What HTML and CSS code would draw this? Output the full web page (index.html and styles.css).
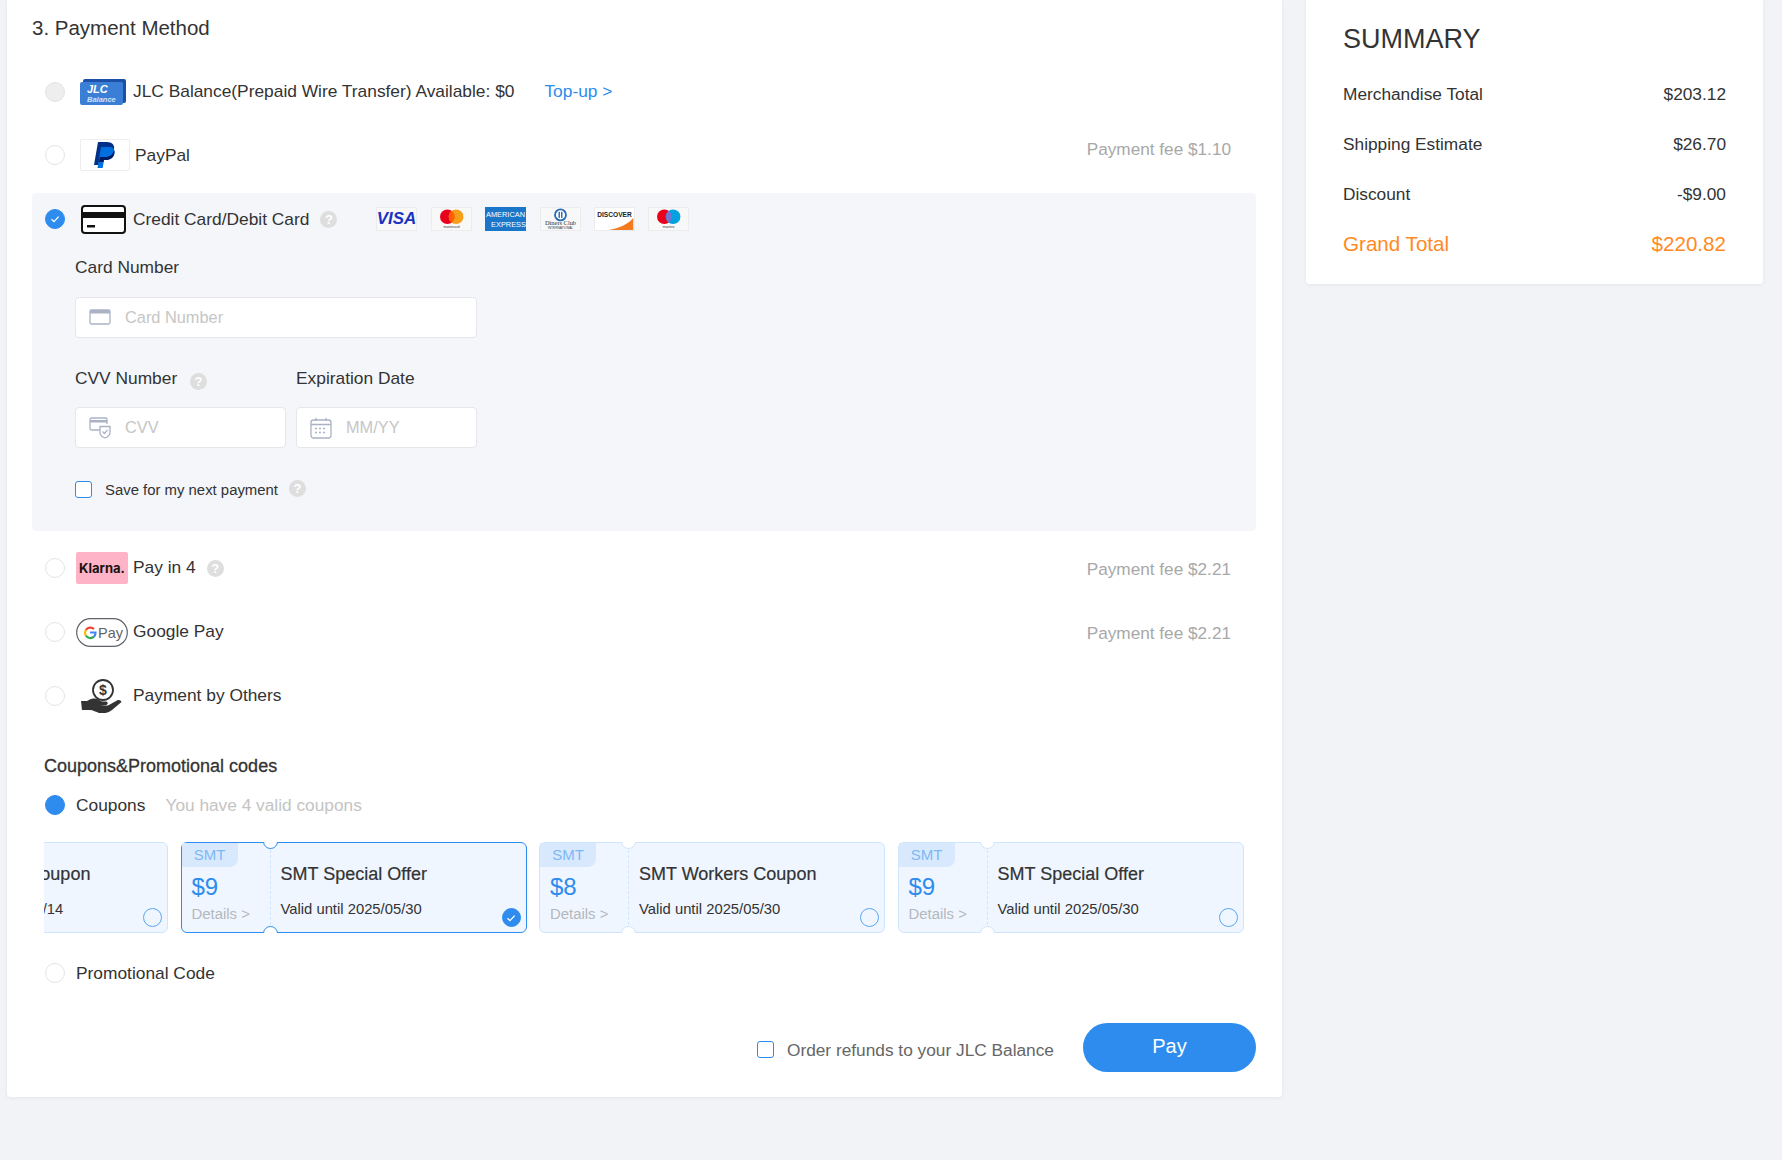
FILE: index.html
```html
<!DOCTYPE html>
<html>
<head>
  <title>Checkout - Payment</title>
  <link rel="stylesheet" href="styles.css">
</head>
<body>
  <div class="page">
    <div class="main-card">
      <h2 class="section-title">3. Payment Method</h2>

      <!-- JLC balance -->
      <div class="pay-row pay-row-jlc">
        <span class="radio radio-disabled"></span>
        <svg class="pay-icon icon-jlc" viewBox="0 0 46 26">
          <rect x="3" y="0" width="43" height="24" rx="2" fill="#1c4fa8"/>
          <rect x="0" y="3" width="43" height="23" rx="2" fill="#3b7ed6"/>
          <text x="7" y="13.500" class="jlc-big">JLC</text>
          <text x="7" y="22.500" class="jlc-small">Balance</text>
        </svg>
        <span class="pay-label">JLC Balance(Prepaid Wire Transfer) Available: $0</span>
        <a class="top-up">Top-up &gt;</a>
      </div>

      <!-- PayPal -->
      <div class="pay-row">
        <span class="radio"></span>
        <span class="paypal-box">
          <svg width="26" height="28" viewBox="0 0 26 28">
            <path d="M6 1h9c5 0 8 3 7 7.500C21 14 17 16 12 16H9l-1.500 8H2z" fill="#003087"/>
            <path d="M9 6h8c4 0 6 2.500 5.500 6C22 16.500 18 19 14 19h-2l-1.300 8H5.500z" fill="#0070e0"/>
            <path d="M8 16h5c4 0 8-2 9-7 .4 1 .6 2 .4 3C22 16.500 18 19 14 19h-2l-.5 2H7z" fill="#001c64"/>
          </svg>
        </span>
        <span class="pay-label">PayPal</span>
        <span class="pay-fee pay-fee-high">Payment fee $1.10</span>
      </div>

      <!-- Credit card panel -->
      <div class="card-panel">
        <div class="pay-row pay-row-card">
          <span class="radio radio-checked">
            <svg width="12" height="12" viewBox="0 0 12 12"><path d="M2.500 6.200 5 8.600 9.600 3.600" fill="none" stroke="#fff" stroke-width="1.300"/></svg>
          </span>
          <svg class="pay-icon icon-card" viewBox="0 0 45 29">
            <rect x="1" y="1" width="43" height="27" rx="3" fill="#fff" stroke="#111" stroke-width="2"/>
            <rect x="1" y="7" width="43" height="6" fill="#111"/>
            <rect x="6" y="20" width="8" height="2.500" fill="#111"/>
          </svg>
          <span class="pay-label">Credit Card/Debit Card</span>
          <span class="help help-card">?</span>
          <div class="brand-list">
            <svg class="brand" viewBox="0 0 41 24">
              <text x="20.500" y="17.500" text-anchor="middle" class="brand-visa">VISA</text>
            </svg>
            <svg class="brand" viewBox="0 0 41 24">
              <circle cx="16" cy="9.500" r="8" fill="#eb001b"/>
              <circle cx="25.500" cy="9.500" r="8" fill="#f79e1b"/>
              <path d="M20.750 3.070a8 8 0 0 1 0 12.860 8 8 0 0 1 0-12.860z" fill="#ff5f00"/>
              <text x="20.500" y="22" text-anchor="middle" class="brand-tiny">mastercard</text>
            </svg>
            <svg class="brand brand-amex" viewBox="0 0 41 24">
              <rect width="41" height="24" fill="#1a76c9"/>
              <text x="20.500" y="10" text-anchor="middle" class="amex-text">AMERICAN</text>
              <text x="23.500" y="20" text-anchor="middle" class="amex-text">EXPRESS</text>
            </svg>
            <svg class="brand" viewBox="0 0 41 24">
              <circle cx="20.500" cy="7.500" r="6" fill="#fff" stroke="#2a6db5" stroke-width="2"/>
              <rect x="18.300" y="4.200" width="1.600" height="6.600" fill="#2a6db5"/>
              <rect x="21.100" y="4.200" width="1.600" height="6.600" fill="#2a6db5"/>
              <text x="20.500" y="19" text-anchor="middle" class="diners-text">Diners Club</text>
              <text x="20.500" y="22.800" text-anchor="middle" class="brand-tiny">INTERNATIONAL</text>
            </svg>
            <svg class="brand brand-white" viewBox="0 0 41 24">
              <path d="M41 11v13H14C26 22 35 18 41 11z" fill="#f47a20"/>
              <text x="20.500" y="10" text-anchor="middle" class="discover-text">DISCOVER</text>
            </svg>
            <svg class="brand" viewBox="0 0 41 24">
              <circle cx="16" cy="9.500" r="8" fill="#eb001b"/>
              <circle cx="25.500" cy="9.500" r="8" fill="#00a1df"/>
              <path d="M20.750 3.070a8 8 0 0 1 0 12.860 8 8 0 0 1 0-12.860z" fill="#7375cf"/>
              <text x="20.500" y="22" text-anchor="middle" class="brand-tiny">maestro</text>
            </svg>
          </div>
        </div>

        <div class="card-form">
          <label class="field-label field-label-first">Card Number</label>
          <div class="input-box input-wide">
            <svg class="input-icon" viewBox="0 0 22 18">
              <rect x="1" y="2" width="20" height="14" rx="1.500" fill="none" stroke="#aab2c5" stroke-width="1.300"/>
              <rect x="1" y="2" width="20" height="3.500" fill="#aab2c5"/>
            </svg>
            <input type="text" placeholder="Card Number">
          </div>

          <div class="field-pair">
            <div class="field-cvv">
              <label class="field-label">CVV Number <span class="help help-cvv">?</span></label>
              <div class="input-box">
                <svg class="input-icon" viewBox="0 0 22 22">
                  <path d="M13 13H2.500A1.500 1.500 0 0 1 1 11.500v-9A1.500 1.500 0 0 1 2.500 1h14A1.500 1.500 0 0 1 18 2.500V7" fill="none" stroke="#aab2c5" stroke-width="1.300"/>
                  <rect x="1" y="3" width="17" height="2.500" fill="#aab2c5"/>
                  <path d="M11 9.500h10v6c0 3-2.500 4.500-5 5.500-2.500-1-5-2.500-5-5.500z" fill="#fff" stroke="#aab2c5" stroke-width="1.300"/>
                  <path d="M13.500 14.500l2 2 3-3.500" fill="none" stroke="#aab2c5" stroke-width="1.200"/>
                </svg>
                <input type="text" placeholder="CVV">
              </div>
            </div>
            <div class="field-date">
              <label class="field-label">Expiration Date</label>
              <div class="input-box">
                <svg class="input-icon" viewBox="0 0 22 22">
                  <rect x="1" y="3" width="20" height="18" rx="2.500" fill="none" stroke="#aab2c5" stroke-width="1.300"/>
                  <path d="M1 7.500h20M6 1v3M16 1v3" fill="none" stroke="#aab2c5" stroke-width="1.300"/>
                  <path d="M5 11.500h12M5 15.500h12" fill="none" stroke="#aab2c5" stroke-width="1.500" stroke-dasharray="2 2"/>
                </svg>
                <input type="text" placeholder="MM/YY">
              </div>
            </div>
          </div>

          <div class="save-row">
            <span class="checkbox"></span>
            <span class="save-text">Save for my next payment</span>
            <span class="help help-save">?</span>
          </div>
        </div>
      </div>

      <!-- Klarna -->
      <div class="pay-row pay-row-klarna">
        <span class="radio"></span>
        <span class="klarna-logo">Klarna.</span>
        <span class="pay-label pay-label-up">Pay in 4</span>
        <span class="help help-klarna">?</span>
        <span class="pay-fee">Payment fee $2.21</span>
      </div>

      <!-- Google Pay -->
      <div class="pay-row">
        <span class="radio"></span>
        <svg class="pay-icon icon-gpay" viewBox="0 0 52 29">
          <rect x=".7" y=".7" width="50.600" height="27.600" rx="13.800" fill="#fff" stroke="#5f6368" stroke-width="1.200"/>
          <path d="M18 11a5.500 5.500 0 0 0-8.200 1" fill="none" stroke="#ea4335" stroke-width="2.200"/>
          <path d="M9.800 12a5.500 5.500 0 0 0 0 5.500" fill="none" stroke="#fbbc04" stroke-width="2.200"/>
          <path d="M9.800 17.500a5.500 5.500 0 0 0 8.200 1.200" fill="none" stroke="#34a853" stroke-width="2.200"/>
          <path d="M18 18.700a5.500 5.500 0 0 0 1.500-4.200H14" fill="none" stroke="#4285f4" stroke-width="2.200"/>
          <text x="22" y="20" class="gpay-text">Pay</text>
        </svg>
        <span class="pay-label pay-label-up">Google Pay</span>
        <span class="pay-fee">Payment fee $2.21</span>
      </div>

      <!-- Payment by others -->
      <div class="pay-row">
        <span class="radio"></span>
        <svg class="pay-icon icon-others" viewBox="0 0 42 34">
          <circle cx="22" cy="11" r="10" fill="#fff" stroke="#333" stroke-width="1.800"/>
          <text x="22" y="16" text-anchor="middle" class="others-text">$</text>
          <path d="M0 22h6l2-1c3-2 7-2 10 0l3 1.500h4c2 0 2.500 3 0 3.500l-6 .5h8l9-5c2-1 4 0 4.500 1.500L31 31c-4 3-9 4-13 3-3-1-6-3-9-3H1z" fill="#333"/>
        </svg>
        <span class="pay-label pay-label-up">Payment by Others</span>
      </div>

      <!-- Coupons -->
      <h3 class="coupon-title">Coupons&amp;Promotional codes</h3>
      <div class="coupon-switch">
        <span class="radio radio-on"></span>
        <span class="switch-label">Coupons</span>
        <span class="switch-hint">You have 4 valid coupons</span>
      </div>

      <div class="coupon-strip">
        <div class="coupon coupon-first">
          <div class="coupon-left">
            <span class="coupon-tag">SMT</span>
            <div class="coupon-price">$8</div>
            <div class="coupon-details">Details &gt;</div>
          </div>
          <div class="coupon-right">
            <div class="coupon-name">SMT Worker Coupon</div>
            <div class="coupon-valid">Valid until 2025/05/14</div>
          </div>
          <span class="coupon-radio"></span>
        </div>
        <div class="coupon coupon-active">
          <div class="coupon-left">
            <span class="coupon-tag">SMT</span>
            <div class="coupon-price">$9</div>
            <div class="coupon-details">Details &gt;</div>
          </div>
          <div class="coupon-right">
            <div class="coupon-name">SMT Special Offer</div>
            <div class="coupon-valid">Valid until 2025/05/30</div>
          </div>
          <span class="coupon-radio coupon-radio-on">
            <svg width="12" height="12" viewBox="0 0 12 12"><path d="M2.500 6.200 5 8.600 9.600 3.600" fill="none" stroke="#fff" stroke-width="1.300"/></svg>
          </span>
        </div>
        <div class="coupon">
          <div class="coupon-left">
            <span class="coupon-tag">SMT</span>
            <div class="coupon-price">$8</div>
            <div class="coupon-details">Details &gt;</div>
          </div>
          <div class="coupon-right">
            <div class="coupon-name">SMT Workers Coupon</div>
            <div class="coupon-valid">Valid until 2025/05/30</div>
          </div>
          <span class="coupon-radio"></span>
        </div>
        <div class="coupon">
          <div class="coupon-left">
            <span class="coupon-tag">SMT</span>
            <div class="coupon-price">$9</div>
            <div class="coupon-details">Details &gt;</div>
          </div>
          <div class="coupon-right">
            <div class="coupon-name">SMT Special Offer</div>
            <div class="coupon-valid">Valid until 2025/05/30</div>
          </div>
          <span class="coupon-radio"></span>
        </div>
      </div>

      <div class="coupon-switch promo-switch">
        <span class="radio"></span>
        <span class="switch-label">Promotional Code</span>
      </div>

      <!-- Footer -->
      <div class="pay-footer">
        <span class="checkbox"></span>
        <span class="refund-text">Order refunds to your JLC Balance</span>
        <button class="pay-button">Pay</button>
      </div>
    </div>

    <div class="summary-card">
      <h2 class="summary-title">SUMMARY</h2>
      <div class="summary-row"><span>Merchandise Total</span><span>$203.12</span></div>
      <div class="summary-row"><span>Shipping Estimate</span><span>$26.70</span></div>
      <div class="summary-row"><span>Discount</span><span>-$9.00</span></div>
      <div class="summary-row summary-total"><span>Grand Total</span><span>$220.82</span></div>
    </div>
  </div>
</body>
</html>
```

FILE: styles.css
```css
body {
  margin: 0;
  height: 1160px;
  overflow: hidden;
  font-family: "Liberation Sans", Arial, sans-serif;
  color: #333;
  background-color: #f2f3f7;
}
.page {
  display: flex;
  align-items: flex-start;
  padding-left: 7px;
}
.main-card {
  width: 1275px;
  height: 1097px;
  padding-left: 25px;
  box-sizing: border-box;
  background-color: #fff;
  border-radius: 0 0 4px 4px;
  box-shadow: 0 1px 4px rgba(0,0,0,0.06);
}
.section-title {
  margin: 0;
  height: 60px;
  line-height: 55px;
  font-size: 20.500px;
  font-weight: normal;
}

/* payment rows */
.pay-row {
  display: flex;
  align-items: center;
  height: 64px;
}
.pay-row-jlc {
  height: 63px;
}
.pay-row-card {
  height: 52px;
}
.pay-row-klarna {
  margin-top: 5px;
}
.radio {
  flex: none;
  display: flex;
  align-items: center;
  justify-content: center;
  width: 20px;
  height: 20px;
  margin: 0 11px 0 13px;
  box-sizing: border-box;
  background-color: #fff;
  border: 1px solid #e4e4e4;
  border-radius: 50%;
}
.radio-disabled {
  background-color: #eee;
}
.radio-checked, .radio-on {
  background-color: #2d8cee;
  border-color: #2d8cee;
}
.pay-icon {
  flex: none;
}
.icon-jlc {
  width: 46px;
  height: 26px;
  margin: 0 7px 0 4px;
}
.icon-card {
  width: 45px;
  height: 29px;
  margin: 0 7px 0 5px;
}
.icon-gpay {
  width: 52px;
  height: 29px;
  margin-right: 5px;
}
.icon-others {
  width: 42px;
  height: 34px;
  margin: 0 10px 0 5px;
}
.jlc-big {
  font: italic bold 11px "Liberation Sans", sans-serif;
  fill: #fff;
}
.jlc-small {
  font: italic bold 7.500px "Liberation Sans", sans-serif;
  fill: #cfe2fa;
}
.paypal-box {
  flex: none;
  display: flex;
  align-items: center;
  justify-content: center;
  width: 50px;
  height: 32px;
  margin: 0 5px 0 4px;
  box-sizing: border-box;
  border: 1px solid #eee;
  border-radius: 2px;
}
.klarna-logo {
  flex: none;
  width: 52px;
  height: 32px;
  margin-right: 5px;
  line-height: 32px;
  text-align: center;
  font-family: Inter, "Liberation Sans", sans-serif;
  font-size: 13px;
  font-weight: bold;
  color: #17120f;
  background-color: #ffb3c7;
  border-radius: 2px;
}
.gpay-text {
  font: 14.500px "Liberation Sans", sans-serif;
  fill: #5f6368;
}
.others-text {
  font: bold 14px "Liberation Sans", sans-serif;
  fill: #333;
}
.pay-label {
  font-size: 17.350px;
}
.pay-label-up {
  margin-bottom: 2px;
}
.top-up {
  margin-left: 30px;
  font-size: 17.350px;
  color: #2d8cee;
}
.pay-fee {
  margin-left: auto;
  margin-top: 2px;
  margin-right: 51px;
  font-size: 17.200px;
  color: #a8a8a8;
}
.pay-fee-high {
  margin-bottom: 13px;
}
.help {
  display: inline-block;
  width: 17px;
  height: 17px;
  line-height: 17px;
  text-align: center;
  font-size: 13px;
  font-weight: bold;
  color: #fff;
  background-color: #dedede;
  border-radius: 50%;
}
.help-card {
  margin-left: 11px;
}
.help-cvv {
  margin-left: 8px;
  vertical-align: -2px;
}
.help-save {
  margin: -2px 0 0 11px;
}
.help-klarna {
  margin-left: 11px;
}

/* credit card logos */
.brand-list {
  display: flex;
  gap: 13.400px;
  margin-left: 39px;
}
.brand {
  width: 41px;
  height: 24px;
  background-color: #f8f8f9;
  border: 1px solid #ececee;
  box-sizing: border-box;
}
.brand-amex {
  border: none;
}
.brand-white {
  background-color: #fff;
}
.brand-visa {
  font: italic bold 18.500px "Liberation Sans", sans-serif;
  fill: #1a34c0;
}
.brand-tiny {
  font: 3.500px "Liberation Sans", sans-serif;
  fill: #333;
}
.amex-text {
  font: 7.400px "Liberation Sans", sans-serif;
  fill: #fff;
}
.diners-text {
  font: 7px "Liberation Serif", serif;
  fill: #333;
}
.discover-text {
  font: bold 7.200px "Liberation Sans", sans-serif;
  fill: #222;
}

/* card form */
.card-panel {
  width: 1224px;
  height: 338px;
  margin-top: 6px;
  background-color: #f4f6fa;
  border-radius: 4px;
}
.card-form {
  padding-left: 43px;
  width: 402px;
}
.field-label {
  display: block;
  height: 24px;
  line-height: 24px;
  margin-bottom: 17px;
  font-size: 17.350px;
}
.field-label-first {
  margin-bottom: 17.500px;
  margin-top: 10px;
}
.input-box {
  display: flex;
  align-items: center;
  height: 41px;
  padding-left: 13px;
  box-sizing: border-box;
  background-color: #fff;
  border: 1px solid #e5e6ea;
  border-radius: 4px;
}
.input-wide {
  margin-bottom: 28.500px;
}
.input-icon {
  flex: none;
  width: 22px;
  height: 22px;
  margin-right: 14px;
}
.input-box input {
  flex: 1;
  min-width: 0;
  border: none;
  outline: none;
  padding: 0;
  background: none;
  font-family: "Liberation Sans", Arial, sans-serif;
  font-size: 16.350px;
}
.input-box input::placeholder {
  color: #c6c6c6;
}
.field-pair {
  display: flex;
  gap: 10px;
}
.field-cvv {
  width: 211px;
}
.field-date {
  width: 181px;
}
.save-row {
  display: flex;
  align-items: center;
  margin-top: 33px;
}
.checkbox {
  flex: none;
  width: 17px;
  height: 17px;
  box-sizing: border-box;
  background-color: #fff;
  border: 1px solid #2d8cee;
  border-radius: 3px;
}
.save-text {
  margin-left: 13px;
  font-size: 14.900px;
}

/* coupons */
.coupon-title {
  margin: 26px 0 0 12px;
  height: 24px;
  line-height: 24px;
  font-size: 18px;
  font-weight: normal;
  -webkit-text-stroke: 0.3px #333;
}
.coupon-switch {
  display: flex;
  align-items: center;
  height: 24px;
  margin-top: 15px;
}
.radio-on {
  margin-right: 11px;
}
.switch-label {
  font-size: 17.350px;
}
.switch-hint {
  margin-left: 20px;
  font-size: 17.300px;
  color: #c4c4c4;
}
.coupon-strip {
  display: flex;
  gap: 12.500px;
  margin: 25px 0 0 12px;
  width: 1212px;
  overflow: hidden;
}
.coupon {
  flex: none;
  position: relative;
  display: flex;
  width: 346px;
  height: 91px;
  box-sizing: border-box;
  background-color: #eff6ff;
  border: 1px solid #cfe5fd;
  border-radius: 6px;
}
.coupon-first {
  margin-left: -222px;
}
.coupon-active {
  border-color: #2d8cee;
}
/* ticket notches */
.coupon::before, .coupon::after {
  content: "";
  position: absolute;
  left: 81px;
  width: 15px;
  height: 15px;
  box-sizing: border-box;
  background-color: #fff;
  border: 1px solid #cfe5fd;
  border-radius: 50%;
}
.coupon::before {
  top: -9px;
}
.coupon::after {
  bottom: -9px;
}
.coupon-active::before, .coupon-active::after {
  border-color: #2d8cee;
}
.coupon-left {
  position: relative;
  width: 88px;
  flex: none;
  border-right: 1px dashed #cfe5fd;
  margin: 7px 0;
}
.coupon-tag {
  position: absolute;
  left: 0;
  top: -7px;
  width: 56px;
  height: 24px;
  line-height: 24px;
  text-align: center;
  font-size: 15px;
  color: #7db8f5;
  background-color: #d8e9fd;
  border-radius: 0 0 8px 0;
}
.coupon-price {
  margin: 23px 0 0 10px;
  font-size: 24px;
  line-height: 28px;
  color: #2d8cee;
}
.coupon-details {
  margin: 4px 0 0 10px;
  font-size: 14.900px;
  line-height: 18px;
  color: #b4b8bd;
}
.coupon-right {
  padding-left: 10px;
}
.coupon-name {
  margin-top: 19px;
  font-size: 18px;
  line-height: 24px;
  -webkit-text-stroke: 0.2px #333;
}
.coupon-valid {
  margin-top: 14px;
  font-size: 14.800px;
  line-height: 18px;
}
.coupon-radio {
  position: absolute;
  right: 5px;
  bottom: 5px;
  display: flex;
  align-items: center;
  justify-content: center;
  width: 19px;
  height: 19px;
  box-sizing: border-box;
  border: 1px solid #5aa5f2;
  border-radius: 50%;
}
.coupon-radio-on {
  background-color: #2d8cee;
  border-color: #2d8cee;
}
.promo-switch {
  margin-top: 28px;
}

/* footer */
.pay-footer {
  display: flex;
  align-items: center;
  justify-content: flex-end;
  width: 1224px;
  margin-top: 38px;
}
.refund-text {
  margin: 5px 29px 0 13px;
  font-size: 17.300px;
  color: #666;
}
.pay-footer .checkbox {
  margin-top: 3px;
}
.pay-button {
  width: 173px;
  height: 49px;
  padding: 0 0 3px;
  font-family: "Liberation Sans", Arial, sans-serif;
  font-size: 20px;
  color: #fff;
  background-color: #2d8cee;
  border: none;
  border-radius: 25px;
}

/* summary */
.summary-card {
  width: 457px;
  height: 284px;
  margin-left: 24px;
  padding: 0 37px;
  box-sizing: border-box;
  background-color: #fff;
  border-radius: 0 0 4px 4px;
  box-shadow: 0 1px 4px rgba(0,0,0,0.06);
}
.summary-title {
  margin: 0;
  height: 69px;
  line-height: 78px;
  font-size: 27px;
  font-weight: normal;
}
.summary-row {
  display: flex;
  justify-content: space-between;
  height: 50px;
  line-height: 50px;
  font-size: 17.300px;
}
.summary-total {
  height: 49px;
  line-height: 49px;
  font-size: 20.600px;
  color: #ff8a24;
}
```
